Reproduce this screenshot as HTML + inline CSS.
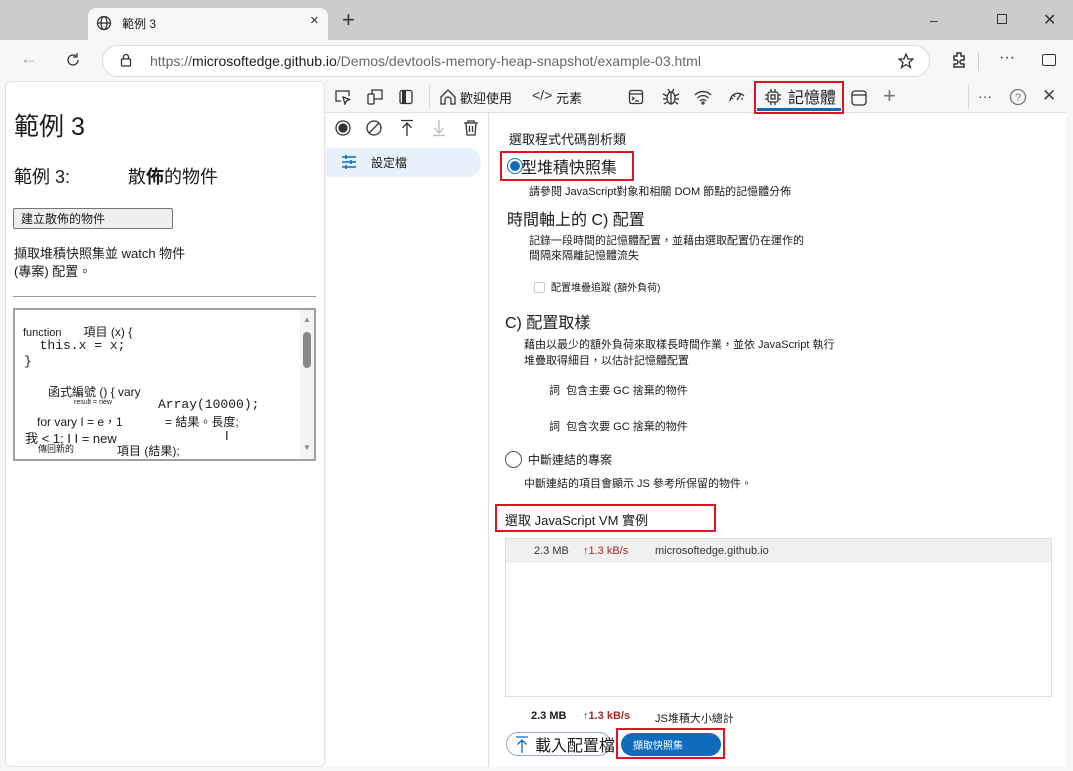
<!DOCTYPE html>
<html><head><meta charset="utf-8"><style>
*{margin:0;padding:0;box-sizing:border-box}
body{width:1073px;height:771px;overflow:hidden;background:#cccccc;font-family:"Liberation Sans","Noto Sans CJK TC",sans-serif;color:#1b1b1b;position:relative}
.a{position:absolute;white-space:nowrap}
svg{position:absolute;fill:none;stroke:#333;stroke-width:1.3}
.red{position:absolute;border:2px solid #e0141e}
</style></head><body>
<div class="a" style="left:88px;top:8px;width:240px;height:34px;background:#f7f7f7;border-radius:8px 8px 0 0"></div>
<svg style="left:96px;top:15px" width="16" height="16" viewBox="0 0 16 16"><circle cx="8" cy="8" r="6.5"/><ellipse cx="8" cy="8" rx="3" ry="6.5"/><path d="M1.5 8h13"/></svg>
<div class="a" style="left:122px;top:15px;font-size:12px">範例 3</div>
<div class="a" style="left:310px;top:12px;font-size:15px;color:#333">×</div>
<div class="a" style="left:342px;top:7px;font-size:22px;color:#333;font-weight:300">+</div>
<div class="a" style="left:930px;top:12px;font-size:14px;color:#333">–</div>
<div class="a" style="left:997px;top:14px;width:10px;height:10px;border:1.3px solid #333"></div>
<div class="a" style="left:1043px;top:10px;font-size:16px;color:#333">✕</div>
<div class="a" style="left:0;top:40px;width:1073px;height:42px;background:#f7f7f7"></div>
<div class="a" style="left:20px;top:48px;font-size:18px;color:#aaa">←</div>
<svg style="left:64px;top:51px" width="18" height="18" viewBox="0 0 18 18"><path d="M14 9a5 5 0 1 1-2-4M13 2v4h-4"/></svg>
<div class="a" style="left:102px;top:45px;width:828px;height:32px;background:#fff;border:1px solid #ddd;border-radius:16px"></div>
<svg style="left:120px;top:53px" width="12" height="14" viewBox="0 0 12 14"><rect x="1.5" y="6" width="9" height="7" rx="1"/><path d="M3.5 6V4a2.5 2.5 0 0 1 5 0v2"/></svg>
<div class="a" style="left:150px;top:53px;font-size:14px;color:#666">https://<span style="color:#1b1b1b">microsoftedge.github.io</span>/Demos/devtools-memory-heap-snapshot/example-03.html</div>
<svg style="left:898px;top:53px" width="16" height="16" viewBox="0 0 16 16"><path d="M8 1l2 5h5l-4 3.5 1.5 5L8 11.5 3.5 14.5 5 9.5 1 6h5z"/></svg>
<svg style="left:950px;top:51px" width="18" height="18" viewBox="0 0 18 18"><path d="M7 2h4v3h3v4h-2a2 2 0 0 0 0 4h2v3H4v-3h2a2 2 0 0 0 0-4H4V5h3z" stroke-width="1.5"/></svg>
<div class="a" style="left:978px;top:52px;width:1px;height:18px;background:#ccc"></div>
<div class="a" style="left:999px;top:49px;font-size:16px;color:#333">···</div>
<div class="a" style="left:1042px;top:54px;width:14px;height:12px;border:1.5px solid #333;border-radius:2px"></div>
<div class="a" style="left:0;top:82px;width:1073px;height:689px;background:#f7f7f7"></div>
<div class="a" style="left:5px;top:81px;width:320px;height:686px;background:#fff;border-radius:6px;border:1px solid #e3e3e3"></div>
<div class="a" style="left:14px;top:107px;font-size:25px">範例 3</div>
<div class="a" style="left:14px;top:163px;font-size:18px">範例 3:<span style="margin-left:58px">散<b>佈</b>的物件</span></div>
<div class="a" style="left:13px;top:208px;width:160px;height:21px;background:#efefef;border:1px solid #767676;border-radius:2px;font-size:12px;padding:1px 0 0 7px">建立散佈的物件</div>
<div class="a" style="left:14px;top:245px;font-size:13px;line-height:18px">擷取堆積快照集並 watch 物件<br>(專案) 配置。</div>
<div class="a" style="left:13px;top:296px;width:303px;height:1px;background:#999"></div>
<div class="a" style="left:13px;top:308px;width:303px;height:153px;border:2px solid #a0a0a0;background:#fff"></div>
<div class="a" style="left:300px;top:310px;width:14px;height:149px;background:#f4f4f4"></div>
<div class="a" style="left:303px;top:332px;width:8px;height:36px;background:#888;border-radius:4px"></div>
<div class="a" style="left:303px;top:315px;font-size:8px;color:#888">▲</div>
<div class="a" style="left:303px;top:443px;font-size:8px;color:#888">▼</div>
<div class="a" style="left:23px;top:323px;font-size:11px">function<span style="margin-left:22px;font-size:12px">項目 (x) {</span></div>
<div class="a" style="left:24px;top:338px;font-size:13px;font-family:'Liberation Mono',monospace;line-height:16px">&nbsp; this.x = x;<br>}</div>
<div class="a" style="left:48px;top:383px;font-size:12px">函式編號 () { vary</div>
<div class="a" style="left:74px;top:399px;font-size:7px">result = new</div>
<div class="a" style="left:158px;top:397px;font-size:13px;font-family:'Liberation Mono',monospace">Array(10000);</div>
<div class="a" style="left:37px;top:413px;font-size:12px">for vary I = e，1</div>
<div class="a" style="left:165px;top:413px;font-size:12px">= 結果。長度;</div>
<div class="a" style="left:25px;top:428px;font-size:13px">我 &lt; 1; I I = new</div>
<div class="a" style="left:225px;top:428px;font-size:13px">I</div>
<div class="a" style="left:38px;top:442px;font-size:9px">傳回新的</div>
<div class="a" style="left:117px;top:442px;font-size:12px">項目 (結果);</div>
<div class="a" style="left:326px;top:81px;width:740px;height:686px;background:#fff"></div>
<div class="a" style="left:326px;top:81px;width:740px;height:32px;background:#f7f7f7;border-bottom:1px solid #e0e0e0"></div>
<svg style="left:334px;top:89px" width="18" height="16" viewBox="0 0 18 16"><path d="M7 12H2V2h13v5M9 8l2 7 1.5-3 3-1.5z"/></svg>
<svg style="left:366px;top:88px" width="18" height="18" viewBox="0 0 18 18"><rect x="2" y="6" width="6" height="10" rx="1"/><path d="M6 6V2h10v9h-8"/></svg>
<svg style="left:398px;top:89px" width="16" height="16" viewBox="0 0 16 16"><rect x="2" y="1.5" width="12" height="13" rx="2"/><path d="M6 1.5v13" stroke-width="4"/></svg>
<div class="a" style="left:429px;top:85px;width:1px;height:24px;background:#ddd"></div>
<svg style="left:439px;top:88px" width="18" height="18" viewBox="0 0 18 18"><path d="M2 9L9 2l7 7v7h-4v-4a3 3 0 0 0-6 0v4H2z"/></svg>
<div class="a" style="left:460px;top:88px;font-size:13px">歡迎使用</div>
<div class="a" style="left:532px;top:87px;font-size:14px;color:#333">&lt;/&gt;</div>
<div class="a" style="left:556px;top:88px;font-size:13px">元素</div>
<svg style="left:628px;top:89px" width="16" height="16" viewBox="0 0 16 16"><rect x="1.5" y="1.5" width="13" height="13" rx="2"/><path d="M1.5 5h13M4 8l2 1.5L4 11M7 12h4"/></svg>
<svg style="left:662px;top:87px" width="18" height="20" viewBox="0 0 18 20"><ellipse cx="9" cy="11" rx="4" ry="6"/><path d="M9 5v12M1 7l4 2M17 7l-4 2M1 12h4M17 12h-4M2 17l3-2M16 17l-3-2M6 2l2 3M12 2l-2 3"/></svg>
<svg style="left:694px;top:89px" width="18" height="16" viewBox="0 0 18 16"><path d="M1 6a11 11 0 0 1 16 0M3.5 9a7.5 7.5 0 0 1 11 0M6 12a4 4 0 0 1 6 0"/><circle cx="9" cy="14" r="1"/></svg>
<svg style="left:728px;top:89px" width="18" height="16" viewBox="0 0 18 16"><path d="M2 12a8 8 0 0 1 14-5M9 11l4-6M6 6l1 2M3 9l2 1M15 10l-2 0"/></svg>
<div class="red" style="left:754px;top:81px;width:90px;height:33px"></div>
<div class="a" style="left:757px;top:108px;width:84px;height:3px;background:#0f6cbd"></div>
<svg style="left:764px;top:88px" width="18" height="18" viewBox="0 0 18 18"><rect x="4" y="4" width="10" height="10" rx="2"/><rect x="7" y="7" width="4" height="4"/><path d="M7 1v3M11 1v3M7 14v3M11 14v3M1 7h3M1 11h3M14 7h3M14 11h3"/></svg>
<div class="a" style="left:788px;top:84px;font-size:16px">記憶體</div>
<svg style="left:850px;top:89px" width="18" height="18" viewBox="0 0 18 18"><rect x="2" y="2" width="14" height="14" rx="3"/><path d="M2 6h14"/></svg>
<div class="a" style="left:883px;top:83px;font-size:22px;color:#777;font-weight:300">+</div>
<div class="a" style="left:968px;top:85px;width:1px;height:24px;background:#ddd"></div>
<div class="a" style="left:978px;top:88px;font-size:14px;color:#333">···</div>
<svg style="left:1009px;top:88px" width="18" height="18" viewBox="0 0 18 18"><circle cx="9" cy="9" r="7.5" stroke="#777"/><text x="9" y="13" text-anchor="middle" font-size="11" fill="#777" stroke="none" font-family="Liberation Sans">?</text></svg>
<div class="a" style="left:1042px;top:86px;font-size:17px;color:#444">✕</div>
<div class="a" style="left:488px;top:113px;width:1px;height:654px;background:#e0e0e0"></div>
<svg style="left:335px;top:120px" width="16" height="16" viewBox="0 0 16 16"><circle cx="8" cy="8" r="7"/><circle cx="8" cy="8" r="4" fill="#333"/></svg>
<svg style="left:366px;top:120px" width="16" height="16" viewBox="0 0 16 16"><circle cx="8" cy="8" r="7"/><path d="M3 13L13 3"/></svg>
<svg style="left:399px;top:119px" width="16" height="18" viewBox="0 0 16 18"><path d="M2 1.5h12M8 4v13M3.5 9L8 4l4.5 5"/></svg>
<svg style="left:431px;top:119px" width="16" height="18" viewBox="0 0 16 18"><path d="M2 16.5h12M8 1v13M3.5 9L8 14l4.5-5" stroke="#bbb"/></svg>
<svg style="left:463px;top:119px" width="16" height="18" viewBox="0 0 16 18"><path d="M1 4h14M5 4V2h6v2M3 4l1 12h8l1-12M6.5 7v6M9.5 7v6"/></svg>
<div class="a" style="left:326px;top:148px;width:155px;height:29px;background:#e8f0fb;border-radius:0 15px 15px 0"></div>
<svg style="left:341px;top:155px" width="16" height="14" viewBox="0 0 16 14"><path d="M1 2h14M1 7h14M1 12h14M5 0v4M10 5v4M5 10v4" stroke="#0f6cbd" stroke-width="1.6"/></svg>
<div class="a" style="left:371px;top:154px;font-size:12px">設定檔</div>
<div class="a" style="left:509px;top:129px;font-size:13px">選取程式代碼剖析類</div>
<div class="red" style="left:500px;top:151px;width:134px;height:30px"></div>
<div class="a" style="left:507px;top:158px;width:16px;height:16px;border-radius:50%;border:1.5px solid #0f6cbd;background:#fff"></div>
<div class="a" style="left:510px;top:161px;width:10px;height:10px;border-radius:50%;background:#0f6cbd"></div>
<div class="a" style="left:521px;top:154px;font-size:16px">型堆積快照集</div>
<div class="a" style="left:529px;top:183px;font-size:11px">請參閱 JavaScript對象和相關 DOM 節點的記憶體分佈</div>
<div class="a" style="left:507px;top:206px;font-size:16px">時間軸上的 C) 配置</div>
<div class="a" style="left:529px;top:234px;font-size:11px;line-height:15px">記錄一段時間的記憶體配置，並藉由選取配置仍在運作的<br>間隔來隔離記憶體流失</div>
<div class="a" style="left:534px;top:282px;width:11px;height:11px;border:1px solid #ccc;border-radius:2px"></div>
<div class="a" style="left:551px;top:279px;font-size:10px">配置堆疊追蹤 (額外負荷)</div>
<div class="a" style="left:505px;top:309px;font-size:16px">C) 配置取樣</div>
<div class="a" style="left:524px;top:337px;font-size:11px;line-height:16px">藉由以最少的額外負荷來取樣長時間作業，並依 JavaScript 執行<br>堆疊取得細目，以估計記憶體配置</div>
<div class="a" style="left:549px;top:382px;font-size:11px">詞&nbsp; 包含主要 GC 捨棄的物件</div>
<div class="a" style="left:549px;top:418px;font-size:11px">詞&nbsp; 包含次要 GC 捨棄的物件</div>
<div class="a" style="left:505px;top:451px;width:17px;height:17px;border-radius:50%;border:1.5px solid #555"></div>
<div class="a" style="left:528px;top:451px;font-size:12px">中斷連結的專案</div>
<div class="a" style="left:524px;top:475px;font-size:11px">中斷連結的項目會顯示 JS 參考所保留的物件。</div>
<div class="red" style="left:495px;top:504px;width:221px;height:28px"></div>
<div class="a" style="left:505px;top:510px;font-size:13px">選取 JavaScript VM 實例</div>
<div class="a" style="left:505px;top:538px;width:547px;height:159px;border:1px solid #ddd"></div>
<div class="a" style="left:506px;top:539px;width:545px;height:24px;background:#f0f0f0"></div>
<div class="a" style="left:534px;top:545px;font-size:11px;color:#333">2.3 MB</div>
<div class="a" style="left:583px;top:545px;font-size:11px;color:#a52a2a">↑1.3 kB/s</div>
<div class="a" style="left:655px;top:545px;font-size:11px;color:#333">microsoftedge.github.io</div>
<div class="a" style="left:531px;top:710px;font-size:11px;font-weight:bold">2.3 MB</div>
<div class="a" style="left:583px;top:710px;font-size:11px;font-weight:bold;color:#a52a2a">↑1.3 kB/s</div>
<div class="a" style="left:655px;top:710px;font-size:11px">JS堆積大小總計</div>
<div class="a" style="left:506px;top:732px;width:105px;height:24px;border:1px solid #9ab;border-radius:12px"></div>
<svg style="left:515px;top:736px" width="14" height="18" viewBox="0 0 14 18"><path d="M1 1h12M7 4v13M2.5 8.5L7 4l4.5 4.5" stroke="#0f6cbd"/></svg>
<div class="a" style="left:535px;top:732px;font-size:16px">載入配置檔</div>
<div class="red" style="left:616px;top:728px;width:109px;height:31px"></div>
<div class="a" style="left:621px;top:733px;width:100px;height:23px;background:#0f6cbd;border-radius:12px;color:#fff;font-size:10px;padding:4px 0 0 12px">擷取快照集</div>
</body></html>
